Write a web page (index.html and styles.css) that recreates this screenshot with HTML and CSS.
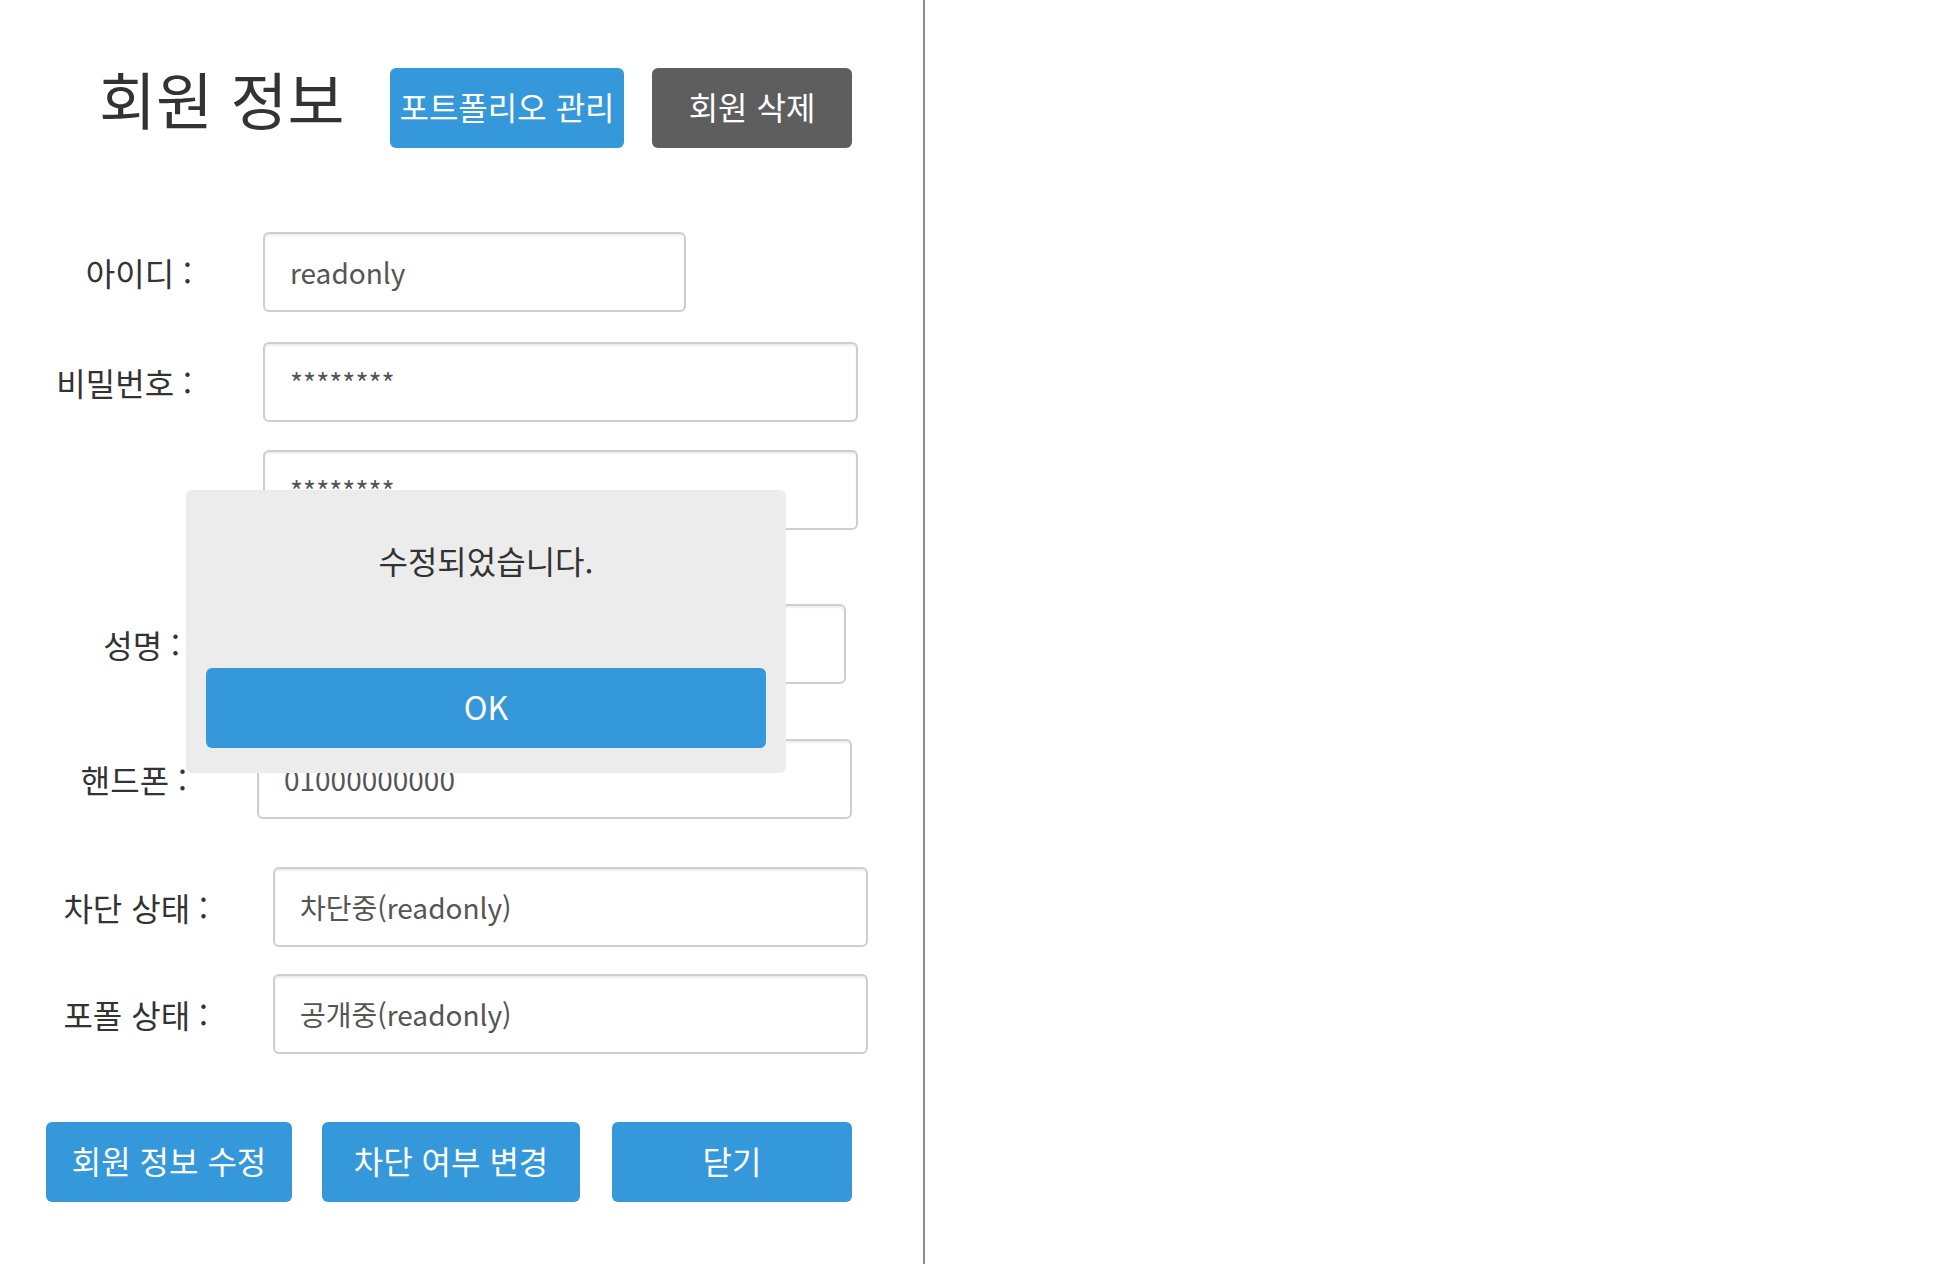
FILE: index.html
```html
<!DOCTYPE html>
<html lang="ko">
<head>
<meta charset="utf-8">
<title>회원 정보</title>
<link rel="stylesheet" href="styles.css">
</head>
<body>
<div class="page">
  <div class="panel">
    <div class="header">
      <h1 class="title">회원 정보</h1>
      <button class="btn btn-portfolio">포트폴리오 관리</button>
      <button class="btn btn-delete">회원 삭제</button>
    </div>
    <div class="form">
      <div class="field f-id">
        <span class="label">아이디 :</span>
        <input class="input input-short" type="text" value="readonly" readonly>
      </div>
      <div class="field f-pw">
        <span class="label">비밀번호 :</span>
        <input class="input" type="text" value="********" readonly>
      </div>
      <div class="field f-pw2">
        <span class="label"></span>
        <input class="input" type="text" value="********" readonly>
      </div>
      <div class="field f-name">
        <span class="label">성명 :</span>
        <input class="input" type="text" value="홍길동" readonly>
      </div>
      <div class="field f-phone">
        <span class="label">핸드폰 :</span>
        <input class="input" type="text" value="01000000000" readonly>
      </div>
      <div class="field f-state">
        <span class="label">차단 상태 :</span>
        <input class="input" type="text" value="차단중(readonly)" readonly>
      </div>
      <div class="field f-state f-port">
        <span class="label">포폴 상태 :</span>
        <input class="input" type="text" value="공개중(readonly)" readonly>
      </div>
    </div>
    <div class="actions">
      <button class="btn btn-edit">회원 정보 수정</button>
      <button class="btn btn-block">차단 여부 변경</button>
      <button class="btn btn-close">닫기</button>
    </div>
    <div class="alert">
      <p class="alert-msg">수정되었습니다.</p>
      <button class="btn alert-ok">OK</button>
    </div>
  </div>
</div>
</body>
</html>
```
FILE: styles.css
```css
* { box-sizing: border-box; }
html, body { margin: 0; padding: 0; background: #fff; }
body {
  font-family: "Noto Sans CJK KR", "Noto Sans", sans-serif;
  color: #333;
}
.page { display: flex; min-height: 1264px; }
.panel {
  position: relative;
  width: 925px;
  min-height: 1264px;
  border-right: 2px solid #8c8c8c;
}
.header {
  display: flex;
  align-items: flex-start;
  padding: 68px 0 0 99px;
}
.title {
  margin: -10px 0 0 0;
  width: 291px;
  font-size: 62px;
  font-weight: 400;
  line-height: 80px;
  color: #333;
  white-space: nowrap;
}
.btn {
  height: 80px;
  padding: 0 0 4px 0;
  border: none;
  border-radius: 6px;
  background: #3598db;
  color: #fff;
  font-family: inherit;
  font-size: 32px;
  line-height: 76px;
  text-align: center;
  white-space: nowrap;
}
.btn-portfolio { width: 234px; }
.btn-delete { width: 200px; margin-left: 28px; background: #5e5e5e; }

.form { display: flex; flex-direction: column; margin-top: 84px; }
.field { display: flex; align-items: center; height: 80px; }
.label {
  flex: none;
  width: 192px;
  font-size: 32px;
  text-align: right;
  white-space: nowrap;
  color: #333;
}
.input {
  flex: none;
  width: 595px;
  height: 80px;
  margin-left: 71px;
  padding: 0 25px;
  border: 2px solid #cecece;
  border-radius: 6px;
  box-shadow: inset 0 2px 2px rgba(0, 0, 0, 0.07);
  background: #fff;
  color: #555;
  font-family: inherit;
  font-size: 28px;
  outline: none;
}
.input-short { width: 423px; }
.f-pw { margin-top: 30px; }
.f-pw2 { margin-top: 28px; }
.f-name { margin-top: 74px; }
.f-name .label { width: 180px; }
.f-name .input { width: 594px; margin-left: 72px; }
.f-phone { margin-top: 55px; }
.f-phone .label { width: 187px; }
.f-phone .input { margin-left: 70px; }
.f-state { margin-top: 48px; }
.f-state .label { width: 208px; }
.f-state .input { margin-left: 65px; }
.f-port { margin-top: 27px; }

.actions { display: flex; margin-top: 68px; padding-left: 46px; }
.btn-edit { width: 246px; }
.btn-block { width: 258px; margin-left: 30px; }
.btn-close { width: 240px; margin-left: 32px; }

.alert {
  position: absolute;
  left: 186px;
  top: 490px;
  width: 600px;
  height: 283px;
  padding: 0 20px;
  border-radius: 6px;
  background: #ececec;
}
.alert-msg {
  margin: 50px 0 0 0;
  font-size: 32px;
  line-height: 40px;
  text-align: center;
  color: #333;
}
.alert-ok { display: block; width: 100%; margin-top: 88px; }
```
